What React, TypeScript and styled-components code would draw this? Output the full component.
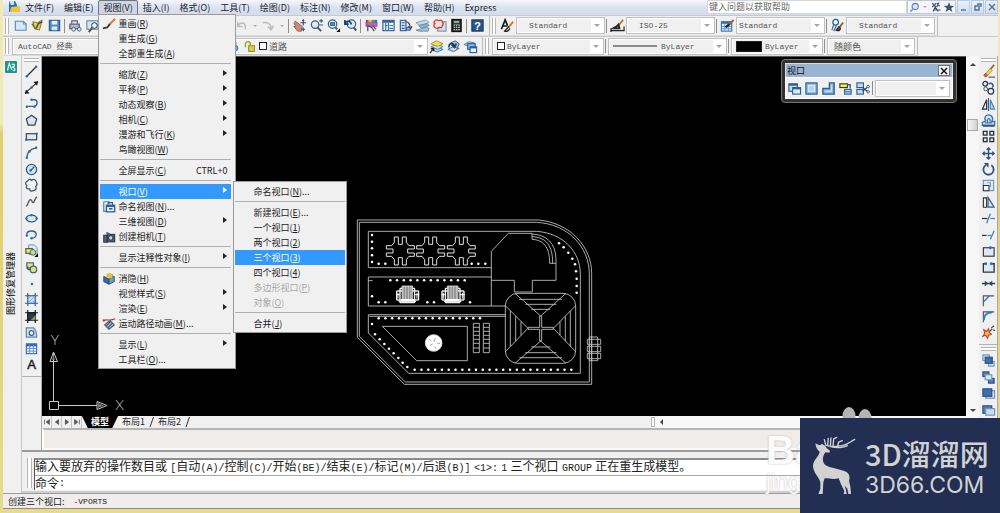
import React from 'react';
import styled, { createGlobalStyle, css } from 'styled-components';

const CJK = `"Noto Sans CJK SC", sans-serif`;
const MONO = `"Liberation Mono", "Noto Sans CJK SC", monospace`;

const GlobalStyle = createGlobalStyle`
  *, *::before, *::after { box-sizing: border-box; }
  body { margin: 0; background: #e9df9c; }
  button, input, select { font: inherit; color: inherit; margin: 0; padding: 0; border: 0; background: none; border-radius: 0; outline: none; }
  svg { display: block; flex: none; }
`;

/* ---------- icons, drawn on a 16 x 16 grid ---------- */

const B = '#2a5c94';
const L = '#a9cdea';
const K = '#2c333c';
const Y = '#ead94e';

const line = (d: string, stroke = K, w = 1.3, fill = 'none') => (
  <path d={d} stroke={stroke} strokeWidth={w} fill={fill} />
);
const dot = (x: number, y: number, r = 1.3, fill = '#1f6fc4') => <circle cx={x} cy={y} r={r} fill={fill} />;
const box = (x: number, y: number, w: number, h: number, fill = L, stroke = B, sw = 1.2) => (
  <rect x={x} y={y} width={w} height={h} fill={fill} stroke={stroke} strokeWidth={sw} />
);

const ICONS: Record<string, React.ReactNode> = {
  new: <>{line('M2.500 3.500H11L14 6.500V13H2.500Z', '#5f89b4', 1.2, '#d5e8f6')}{line('M11 3.500V6.500H14', '#5f89b4', 1)}</>,
  open: <>{line('M3 4L8 5 13 2 10 13 5 11Z', '#8a7420', 1, '#f0c850')}{line('M6 12L9 6 13 4', '#3b4a55', 1.5)}{line('M2 6L6 12', '#54813a', 1.5)}</>,
  save: <>{box(2.5, 2.5, 11, 11, '#4d86bf', '#27598c')}{box(5, 3, 6, 4, '#e4f0fa', '#e4f0fa', 0)}{box(5, 9, 6, 4, '#dfe6ec', '#dfe6ec', 0)}</>,
  print: <>{line('M4 6V3H10V6', '#55657a', 1.2, '#dfe7f0')}{box(2, 6.5, 10, 5, '#aeb9c9', '#4b5b74')}<circle cx="6" cy="12" r="2" fill="#e0e6ee" stroke="#4b5b74" /><circle cx="12" cy="12" r="2" fill="#e0e6ee" stroke="#4b5b74" /></>,
  preview: <>{box(2, 3, 12, 9, '#d5e8f6', '#5f89b4')}<circle cx="10" cy="8" r="3" fill="#e8f4fc" stroke={K} />{line('M8 10L4 15', '#6a5030', 2)}</>,
  page: <>{box(3, 2, 10, 12, '#e8f0f8', '#5f89b4')}{line('M5 5H11M5 8H11M5 11H9', B, 1)}</>,
  cut: <>{line('M5 2L10 11M11 2L6 11', '#556', 1.3)}<circle cx="5" cy="12.5" r="2" fill="none" stroke={B} /><circle cx="11" cy="12.5" r="2" fill="none" stroke={B} /></>,
  undo: line('M4 4V9H9M4 9C6 4 12 4 12 9V12', '#b9bdc2', 1.6),
  redo: line('M3 5C8 4 12 6 12 12M8.500 9L12 12.500 14.500 8.500', '#b9bdc2', 1.6),
  pan: <>{line('M3 3L11 9 10 14H6L2 9 4 9 2 5', '#9d5b52', 1, '#c98a80')}{line('M12 2V8M9 5H15M11 3L12 2 13 3M10 12H14M12 10V14', '#2b4c74', 1.2)}</>,
  zoomrt: <><circle cx="6.5" cy="7" r="4" fill="#dcebf7" stroke="#3f5f80" strokeWidth="1.3" />{line('M9 10L13 14', '#4b5560', 2)}{line('M11 3H15M13 1V5M11 7.500H15', B, 1.2)}</>,
  zoomwin: <><circle cx="7" cy="6.5" r="4.5" fill="#dcebf7" stroke="#3f5f80" strokeWidth="1.3" />{box(5, 5, 4, 3, '#5b8fc4', B, 1)}{line('M10 10L12 12', '#4b5560', 2)}<path d="M11 15H15V11Z" fill="#111" /></>,
  zoomprev: <><circle cx="9" cy="6.5" r="4.5" fill="#dcebf7" stroke="#3f5f80" strokeWidth="1.3" />{line('M11.500 10L14 13.500', '#4b5560', 2.2)}{line('M2 6C4 2 8 3 9 7M2 2V6.500H6', '#123e70', 1.7)}</>,
  props: <><path d="M2 2H5V5H2Z" fill="#d33" /><path d="M5 2H8V5H5Z" fill="#e8c030" /><path d="M8 2H11V5H8Z" fill="#38a838" /><path d="M11 2H14V5H11Z" fill="#3466d8" />{box(2, 5, 12, 4, '#b562c4', '#6b3c80', .5)}{line('M4 14V8L8 10 11 14M9 8L13 12', '#5a5560', 1.4)}</>,
  dc: <>{box(2, 2.5, 12, 11, '#e9f3fb', '#2f5f93')}{line('M2 4H14', '#2f5f93', 2)}{line('M5 5V13M8 5V13M4 8H7M9 8H13M9 11H13', '#3f78b4', 1.3)}</>,
  palettes: <>{box(2.5, 2.5, 6, 11, '#cfe2f2', '#2f5f93')}{line('M4 5H7M4 8H7M4 11H7', B, 1.2)}{line('M8 4C12 4 13 7 13 11M11 9L13 12 15 9', K, 1.3)}{box(9, 10, 4, 3, '#8cb7dc', B, 1)}</>,
  sheets: <>{line('M1 5L12 2 15 5 5 8Z', '#7f9db8', 1, '#c3dbed')}{line('M4 8L13 6 15 8 7 11Z', '#5f86a5', 1, '#8fb4cf')}{line('M1 13L12 10 15 11 14 14H4Z', '#6f8fa8', 1, '#a6c4d8')}</>,
  markup: <>{box(6, 4, 9, 10, '#cfe0ef', '#7f92a8')}{line('M3 3Q5 1 7 3 10 1 11 4 13 6 11 8 11 11 8 10 5 12 3 10 1 8 3 6 1 5 3 3Z', '#d4363e', 1.3, '#fae1e1')}</>,
  calc: <>{box(3, 1.5, 10, 13, '#23262b', '#111')}{box(5, 3, 6, 2.5, '#85c08a', '#333', .5)}{line('M5 7.500H11.500M5 10H11.500M5 12.500H11.500', '#d5d5d5', 1.3)}{line('M6.800 7V13.500M9.300 7V13.500', '#23262b', 1)}</>,
  textstyle: <>{line('M1.500 12L5.500 2 8 8M3 8.500H8', '#15181c', 1.8)}{line('M14 4L9 10', '#bf7428', 2)}{line('M9.500 9L5 14C7 15 10 13 10.500 11', '#222', 1.5)}</>,
  dimstyle: <>{line('M1 13.500H15M1 11V15M1 12L6 9M15 9V14', '#222', 1.3)}{line('M14 2L9 8', '#bf7428', 2)}{line('M9 7L5 11 10 11Z', '#222', 2)}</>,
  tablestyle: <>{box(1.5, 4, 11, 10, '#eaf4fc', '#3870b0')}{line('M1.500 5H12.500', '#3870b0', 2.5)}{line('M1.500 9H12M1.500 11.500H12M5 5V14M9 5V14', '#5d94cf', 1)}{line('M14.500 2L10 7', '#a55f20', 2)}{line('M10 6.500L6 10', '#222', 2.5)}</>,
  mleader: <><circle cx="6" cy="4.5" r="3" fill="#dff" stroke={B} strokeWidth="1.3" />{line('M4 7L2 13M7 8L4 14', B, 1.2)}{line('M14 5L10 10', '#a55f20', 2)}{line('M10 9L7 13C10 14 11 12 11 10', '#222', 1.7)}</>,
  layermake: <>{line('M2 11L9 9 15 11 9 14Z', '#4a7fae', 1, '#a9cdea')}{line('M2 8L9 6 15 8 9 11Z', '#5d86a0', 1, '#c9dff1')}{line('M2 5L8 2 15 5 9 8Z', '#a3902c', 1, '#f2df58')}{line('M1 15L5 10M5 13V10H2', '#222', 1.2)}</>,
  layerprev: <>{line('M2 11L8 8 14 10 8 13.500Z', '#4c627a', 1, '#c9dae9')}{line('M5 4L10 2 14 5 12 10 8 8Z', '#4c627a', 1, '#9fbdd8')}{line('M3 9C3 4 8 3 9 8M6 6L9 9 11 5', '#163c6c', 1.6)}</>,
  layerstate: <>{line('M1 6L6 3 12 4 8 8Z', '#4c7fa9', 1, '#bcd9ef')}{box(5, 5, 8, 6, '#8dbce4', B)}{box(7.5, 8.5, 7, 6, '#eaf4fc', B)}{line('M7.500 9H14.500', B, 2)}</>,
  sun: <>{box(2, 3, 9, 10, '#c6d9e8', '#6d91ae')}<circle cx="10" cy="10" r="3.5" fill="#77a7d0" stroke="#3f6e98" /></>,
  lock: <>{box(7, 7, 7, 7, '#dcd244', '#8a8420')}{line('M3 9V5C3 1 9 1 9 5V7', '#a49d28', 1.8)}</>,
  bulb: <><circle cx="8" cy="6" r="4" fill="#f3e26a" stroke="#8a8420" />{line('M6 11H10M6 13H10', '#777', 1.3)}</>,
  help: <>{box(2, 2, 12, 12, '#27588c', '#173c66')}<text x="8" y="12.5" textAnchor="middle" fontFamily="Liberation Sans" fontWeight="700" fontSize="12" fill="#fff">?</text></>,
  search: <><circle cx="9" cy="6.5" r="4.5" fill="#d8e6fa" stroke="#5a7fc4" strokeWidth="1.5" />{line('M6 10L2 14', '#8a94a8', 2.2)}</>,
  satellite: <>{line('M3 3L8 8M8 3L3 8M9 3L13 7M12 2L9 8', '#4c5f86', 1.8)}{line('M7 8L4 14M7 8L11 14M5 12H14', '#39486a', 1.5)}</>,
  star: <path d="M8 1.500L10 6.200 15 6.500 11 9.700 12.500 14.500 8 11.700 3.500 14.500 5 9.700 1 6.500 6 6.200Z" fill="#3d5678" />,
  xline: <>{line('M1 14L15 2', K, 1.4)}<path d="M1 15L2 10 6 14ZM15 1L10 2 14 6Z" fill="#222" />{dot(8, 8)}</>,
  lineSeg: <>{line('M3 13L13 3', K, 1.4)}{dot(3, 13)}{dot(13, 3)}</>,
  pline: <>{line('M8 4H11C15 4 15 10 11 11H3', '#43617f', 1.4)}{dot(8, 4)}{dot(11, 11.5)}{dot(3, 11.5)}</>,
  polygon: line('M8 2.500L13.500 6.500 11.500 13H4.500L2.500 6.500Z', '#3c4754', 1.4, '#d4e6f5'),
  rectangle: <>{box(2.5, 5, 11, 6.5, '#dceaf6', '#3c4754', 1.3)}{dot(2.5, 11.5)}{dot(13.5, 5)}</>,
  arc: <>{line('M3 14C3 8 7 4 13 3', '#43617f', 1.4)}{dot(3, 13.5)}{dot(6, 7)}{dot(13, 3)}</>,
  circle: <><circle cx="8" cy="8" r="5.5" fill="#cfe3f4" stroke="#3c5c7c" strokeWidth="1.4" />{line('M7 9L11 5', B, 1.4)}{dot(7, 9)}</>,
  cloud: line('M4 3Q6 0 8 2.500 12 0 13 4 15 7 12.500 9 14 13 10 13.500 6 15 6 11.500 1 12 3 8 0 5 4 3Z', '#4b5662', 1.4, '#eef3f8'),
  spline: line('M2 13C5 13 4 6 7 6 9 6 8 10 10 9 12 8 11 4 14 3', '#4b5662', 1.4),
  ellipse: <><ellipse cx="8" cy="8" rx="5.5" ry="3.6" fill="#dceaf6" stroke="#3c5c7c" strokeWidth="1.4" />{dot(2.5, 8)}{dot(13.5, 8)}{dot(8, 4.5)}</>,
  ellarc: <>{line('M3 8C3 3 13 3 13 8 13 10 11 12 8 12', '#3c5c7c', 1.4, '#e6eff8')}{dot(3, 9)}{dot(8, 12)}</>,
  insert: <>{line('M5 2H11L14 5V12H5Z', '#6b8fb0', 1, '#dbe9f5')}{box(2, 6, 7, 5, '#f2e66b', '#4c5a34')}<circle cx="9.5" cy="10" r="3" fill="#cadb74" stroke="#3d6490" /><path d="M11 15H15V11Z" fill="#111" /></>,
  block: <>{box(3, 3, 7, 5.5, '#f0e470', '#3d6490')}<circle cx="10" cy="10" r="3.5" fill="#dde27c" stroke="#3d6490" strokeWidth="1.3" />{line('M4 10H7M4 10V7', '#234', 1)}</>,
  point: dot(8.5, 8.5, 1.3),
  hatch: <>{box(4, 4, 8, 8, '#cfe3f4', '#33608e', 1.3)}{line('M4 1V4M12 1V4M4 12V15M12 12V15M1 4H4M12 4H15M1 12H4M12 12H15', '#33608e', 1.3)}{line('M4 8L8 4M4 12L12 4M8 12L12 8', '#7ea8cd', 1)}</>,
  gradient: <>{box(4, 4, 8, 8, '#25394f', '#14202e', 1.6)}{line('M7 12L12 7V12Z', '#8c8048', .5, '#9a8d50')}{line('M4 1V4M12 1V4M4 12V15M12 12V15M1 4H4M12 4H15M1 12H4M12 12H15', '#14202e', 1.3)}</>,
  region: <>{line('M2.500 3H10C13 5 13.500 8 13.500 13H2.500Z', '#5d86ad', 1.3, '#cfe2f2')}<circle cx="8" cy="8.5" r="2.5" fill="#fff" stroke="#33608e" strokeWidth="1.3" /></>,
  table: <>{box(2.5, 3, 11, 10.5, '#eff6fd', '#3565b0')}{line('M2.500 4.500H13.500', '#3565b0', 2.5)}{line('M2.500 8H13.500M2.500 10.800H13.500M6 4V13.500M10 4V13.500', '#5d8fce', 1)}</>,
  mtext: <text x="8" y="13" textAnchor="middle" fontFamily="Liberation Sans" fontSize="14" fill="#1c1f24" stroke="#1c1f24" strokeWidth=".5">A</text>,
  erase: <>{line('M14 1L8 8', '#a0622a', 2)}{line('M10 5L5 10 7 12 12 7Z', '#c49a2c', 1, Y)}{line('M5 10L3 12 5 14 7 12Z', '#a33', 1, '#dd6464')}{line('M8 14H15', K, 1)}</>,
  copy: <><circle cx="4.5" cy="4" r="2.5" fill="#eaf1f8" stroke={K} strokeWidth="1.3" /><circle cx="10.5" cy="12" r="3" fill="#eaf1f8" stroke={K} strokeWidth="1.3" /><circle cx="5" cy="9.5" r="2" fill="none" stroke={B} />{line('M8 4C12 2 14 6 12 8', B, 1.5)}</>,
  mirror: <>{line('M6 3V13H1.500Z', K, 1.3)}{line('M10 3V13H14.500Z', '#4c82ba', 1.3, '#c0dbf2')}{line('M8 1V15', B, 1.2)}</>,
  offset: <>{line('M1.500 13H14.500V9H11.500C14 5 11 2 8 2 5 2 3 5 5 8.500L1.500 10Z', '#3a74b4', 1.5, '#d6e8f7')}{line('M4 10.500H7.500C6 8 7 6 8.500 6 10 6 10 8 9 10.500H12', '#3a74b4', 1.2)}{line('M2 14H14.500', K, 1.2)}</>,
  array: <>{box(2.5, 2.5, 4, 4, '#dce6ef', K, 1.4)}{box(9.5, 2.5, 4, 4, '#dce6ef', K, 1.4)}{box(2.5, 9.5, 4, 4, '#dce6ef', K, 1.4)}{box(9.5, 9.5, 4, 4, '#dce6ef', K, 1.4)}</>,
  move: line('M8 2V14M2 8H14M6 4L8 2 10 4M6 12L8 14 10 12M4 6L2 8 4 10M12 6L14 8 12 10', '#2d5688', 1.5),
  rotate: <>{line('M5 3.500A5.500 5.500 0 1 0 11 3.500', '#2d5688', 1.9)}<path d="M3 1H8V6Z" fill="#2d5688" /></>,
  scale: <>{box(2.5, 2.5, 11, 11, '#d9e9f6', '#7294b2')}{line('M2.500 8H8.500V13.500H2.500Z', K, 1.1, '#f4f8fb')}{line('M10 10V5H7', '#7294b2', 1)}</>,
  stretch: <>{line('M2.500 3H6V13H2.500Z', K, 1.2)}{line('M7.500 2.500L14 13H7.500Z', '#3f5f80', 1.3, '#cfe2f2')}</>,
  trim: <>{line('M1 8H7', K, 1.3)}{line('M10 8H15', '#3c82cc', 1.3)}{line('M6 13L10 3', '#3c82cc', 1.4)}</>,
  extend: <>{line('M1 9H6', K, 1.3)}{line('M7 9H11', '#3c82cc', 1.3)}{line('M10 13L14 4', '#3c82cc', 1.4)}</>,
  breakpt: <>{box(2.5, 4, 11.5, 9, '#dfe9f2', K)}{dot(10, 4, 1.5)}</>,
  breakit: <>{line('M5 4H2.500V13H14V4H11', K, 1.4, '#dfe9f2')}{dot(5, 4, 1.5)}{dot(11, 4, 1.5)}</>,
  join: <>{line('M1 8H15', '#333', 1.5)}<path d="M4 5L8 8 4 11ZM12 5L8 8 12 11Z" fill="#24476e" /></>,
  chamfer: <>{line('M2.500 14V3H14', '#555', 1.2)}{line('M3 9L9 3', '#2d79c8', 1.5)}</>,
  fillet: <>{line('M2.500 14V3H14', '#555', 1.2)}{line('M3 12C3 6 6 3.500 12 3.500', '#2d79c8', 1.9)}</>,
  explode: <>{line('M3 5L6 7 8 4 9 8 11 10 8 11 7 14 5 11 2 12 4 9Z', '#c0392b', 1.2, '#f0c93d')}{line('M9 7L12 4M11 3L14 1M13 5L15 6', '#444', 1.2)}</>,
  front: <>{box(2, 2, 7, 6, '#c9dff1', '#6f93b5')}{box(8, 9, 6, 5, '#c9dff1', '#6f93b5')}{box(4.5, 4.5, 7.5, 6.5, '#3f6fa6', '#27508a')}</>,
  back: <>{box(2, 2, 6.5, 5, '#4f7fb4', '#27508a')}{box(8, 9, 6, 5, '#4f7fb4', '#27508a')}{box(4.5, 5, 7, 5.5, '#d5e6f4', '#6f93b5')}</>,
  above: <>{box(5, 5, 9.5, 8, '#c9dff1', '#6f93b5')}{box(2, 3, 9.5, 8, '#3f6fa6', '#27508a')}</>,
  under: <>{box(2, 3, 9.5, 8, '#4f7fb4', '#27508a')}{box(5, 6, 9.5, 7, '#c9dff1', '#6f93b5')}</>,
  brush: <>{line('M15 2L8 9', '#d48a4a', 2.5)}{line('M9 8L6 12 1 13', '#4b3526', 2.2)}</>,
  namedviews: <>{line('M2 2H8V5M2 2V13H5', '#5d86ad', 1.4)}{box(5, 6, 9.5, 7.5, '#e4effa', '#2d5f97', 1.5)}{line('M5 7H14M8 10H12', '#2d5f97', 1.8)}{line('M7 5V3H12V6', '#2d5f97', 1.3)}</>,
  camera: <>{box(2, 6, 4, 8, '#5c646d', '#30363d')}{box(6, 5, 8.5, 8.5, '#515e6c', '#283038')}<circle cx="10" cy="9" r="2.5" fill="#c9dcec" stroke="#1c2a3c" />{line('M5 3L9 5', '#3c6ca0', 2)}</>,
  hide: <>{line('M2 5L8 8V14L2 11Z', '#1f497e', 1, '#366ba8')}{line('M8 8L14 5V11L8 14Z', '#1f497e', 1, '#6d9fd2')}{line('M8 2V7H12V3Z', '#a58c18', 1, '#f0d33c')}{dot(8, 4, 3, '#e5c433')}</>,
  motion: <>{line('M2 4C5 2 10 5 15 2', '#c43838', 1.2)}{line('M3 9L9 4 14 9 8 14Z', '#40566e', 1.3, '#b8cbdc')}{line('M5 10L10 5M7 12L12 7', '#40566e', 1.5)}{dot(2, 4, 1.3, '#b33')}</>,
  recover: <>{box(2, 2, 12, 12, '#1f9d92', '#12776e')}{line('M4 12L6 4 9 11M9 5C13 4 13 8 9 8 14 9 13 13 10 12', '#d5f5ee', 1.4)}</>,
  vpnamed: <>{box(2, 3, 9, 8, '#bfdaf0', '#2f5f93')}{line('M2 4H11', '#2f5f93', 2)}{box(6, 7, 8.5, 7, '#dcebf8', '#2f5f93')}{line('M6 8H14', '#2f5f93', 1.8)}</>,
  vpsingle: <>{box(2, 2, 12, 12, '#7fb0dc', '#2f5f93')}{box(4.5, 4.5, 7, 7, '#b4d5f0', '#e4f1fb', 1)}</>,
  vppoly: <>{line('M9 2H14V14H2V8H9Z', '#2f5f93', 1.5, '#8fbce2')}{line('M11 4.500V11H4.500', '#dcebf8', 1)}</>,
  vpobj: <>{box(2, 3, 8, 4, '#f1ee4a', '#3a3a20')}{line('M10 4H13V8', '#2f5f93', 1.4)}{box(7, 9, 7, 5, '#bfdaf0', '#2f5f93')}{line('M7 11.500H14', '#2f5f93', 1)}</>,
  vpclip: <>{box(2, 2, 7, 5, '#bfdaf0', '#2f5f93')}{box(2, 9, 7, 5, '#bfdaf0', '#2f5f93')}{line('M8 7L13 11M8 11L13 7', '#3c4a66', 1.3)}<circle cx="14" cy="11.5" r="1.3" fill="none" stroke="#2f5f93" /><circle cx="14" cy="6" r="1.3" fill="none" stroke="#2f5f93" /></>,
};

const Icon = ({ name, size = 15 }: { name: string; size?: number }) => (
  <svg width={size} height={size} viewBox="0 0 16 16" aria-hidden="true">{ICONS[name]}</svg>
);

/* ---------- frame ---------- */

const Window = styled.div`
  position: relative;
  display: flex;
  flex-direction: column;
  min-height: 100vh;
  padding: 0 2px 4px 3px;
  background: linear-gradient(to bottom, #f0e9b4 0, #f0e9b4 24%, #e0cf6c 26%, #e6da8c 100%);
  font-family: ${CJK};
  font-size: 9px;
  line-height: 14px;
  color: #222;
`;

const MenuBar = styled.nav`
  position: relative;
  z-index: 5;
  display: flex;
  align-items: stretch;
  height: 15px;
  background: linear-gradient(to bottom, #f4f6fb, #dbe2f1 50%, #d3dbee);
`;

const AppLogo = styled.span`
  display: flex;
  width: 17px;
  padding: 0 2px 0 5px;
`;

const MenuSlot = styled.div`
  position: relative;
  display: flex;
`;

const MenuButton = styled.button<{ $open?: boolean }>`
  padding: 0 4px;
  line-height: 13px;
  border: 1px solid transparent;
  white-space: nowrap;
  color: #1a1f2b;
  ${p => p.$open && css`
    border: 1px solid #70757f;
    border-radius: 2px 2px 0 0;
    background: #cfd5e4;
  `}
`;

const SearchBox = styled.input`
  flex: 0 1 200px;
  min-width: 80px;
  margin-left: auto;
  padding: 0 1px;
  height: 14px;
  background: #fff;
  border: 1px solid #d4d7de;
  color: #555;
  &::placeholder { color: #666; opacity: 1; }
`;

const InfoTools = styled.div`
  display: flex;
  align-items: center;
  height: 14px;
  background: #f3f6fb;
  border: 1px solid #c2c7d2;
`;

const InfoButton = styled.button<{ $w?: number }>`
  display: flex;
  align-items: center;
  justify-content: center;
  width: ${p => p.$w ?? 13}px;
  height: 12px;
`;

const DocButtons = styled.div`
  display: flex;
  gap: 1px;
  margin-left: 1px;
`;

const DocButton = styled.button`
  display: flex;
  align-items: center;
  justify-content: center;
  width: 13px;
  height: 14px;
  background: linear-gradient(#e9f2fb, #cddff1);
  border: 1px solid #b4cbe2;
`;

/* ---------- drop-down menus ---------- */

const MenuPanel = styled.ul<{ $sub?: boolean }>`
  position: absolute;
  z-index: 10;
  top: ${p => (p.$sub ? '-3px' : '14px')};
  left: ${p => (p.$sub ? '133px' : '0')};
  width: ${p => (p.$sub ? 114 : 138)}px;
  margin: 0;
  padding: ${p => (p.$sub ? '2px 1px 1px' : '1px 4px 1px 1px')};
  list-style: none;
  background: #f0f0f0;
  border: 1px solid #9b9b9b;
`;

const MenuRow = styled.li<{ $active?: boolean; $disabled?: boolean }>`
  position: relative;
  color: ${p => (p.$disabled ? '#a8a8a8' : p.$active ? '#fff' : '#222')};
  background: ${p => (p.$active ? '#3399ff' : 'transparent')};
`;

const MenuItem = styled.button`
  display: flex;
  align-items: center;
  width: 100%;
  height: 15px;
  line-height: 15px;
  text-align: left;
  white-space: nowrap;
`;

const MenuGutter = styled.span`
  display: flex;
  justify-content: center;
  width: 18px;
  flex: none;
`;

const Shortcut = styled.span`
  margin-left: auto;
  padding-right: 4px;
`;

const SubArrow = styled.span`
  margin-left: auto;
  margin-right: 4px;
  margin-bottom: 4px;
  border-left: 4px solid currentColor;
  border-top: 3px solid transparent;
  border-bottom: 3px solid transparent;
`;

const MenuRule = styled.li`
  height: 6px;
  padding-top: 2px;
  &::before { content: ''; display: block; height: 1px; background: #b0b0b0; }
`;

/* ---------- toolbars ---------- */

const ToolRow = styled.div<{ $h: number }>`
  display: flex;
  height: ${p => p.$h}px;
  background: #f0f0f0;
  border-top: 1px solid #c9c9c9;
`;

const ToolGroup = styled.div<{ $pad?: number }>`
  display: flex;
  align-items: center;
  padding-right: ${p => p.$pad ?? 3}px;
  border-right: 1px solid #bdbdbd;
  border-bottom: 1px solid #dcdcdc;
`;

const Grip = styled.span<{ $across?: boolean }>`
  flex: none;
  ${p => p.$across ? css`
    width: 15px; height: 4px; margin: 2px auto 1px;
    border-top: 1px solid #b4b4b4; border-bottom: 1px solid #b4b4b4;
  ` : css`
    width: 4px; height: 16px; margin: 0 3px 0 2px;
    border-left: 1px solid #b4b4b4; border-right: 1px solid #b4b4b4;
  `}
  background: #fff;
`;

const ToolButton = styled.button<{ $w?: number }>`
  display: flex;
  flex: none;
  align-items: center;
  justify-content: center;
  width: ${p => p.$w ?? 17}px;
  height: 17px;
`;

const Divider = styled.span<{ $m?: number }>`
  flex: none;
  width: 1px;
  height: 14px;
  margin: 0 ${p => p.$m ?? 2}px 0 1px;
  background: #909090;
`;

const ComboFrame = styled.span<{ $w: number }>`
  display: flex;
  flex: none;
  align-items: center;
  width: ${p => p.$w}px;
  height: 17px;
  border: 1px solid #c0c0c0;
  box-shadow: inset 0 0 0 1px #fff;
  background: #f0f0f0;
`;

const ComboSelect = styled.select<{ $indent: number; $cjk?: boolean }>`
  appearance: none;
  flex: 1;
  min-width: 0;
  height: 15px;
  padding-left: ${p => p.$indent}px;
  font-family: ${p => (p.$cjk ? CJK : MONO)};
  font-size: ${p => (p.$cjk ? 9 : 8)}px;
  line-height: 15px;
  color: #555;
`;

const ComboArrow = styled.span`
  display: flex;
  align-items: center;
  justify-content: center;
  width: 12px;
  height: 13px;
  margin-right: 1px;
  background: #fff;
  &::after { content: ''; border-top: 3px solid #a5a5a5; border-left: 3px solid transparent; border-right: 3px solid transparent; }
`;

const Swatch = styled.span<{ $w: number; $h: number; $fill: string }>`
  flex: none;
  width: ${p => p.$w}px;
  height: ${p => p.$h}px;
  margin-left: 4px;
  background: ${p => p.$fill};
  border: 1px solid ${p => (p.$h === 1 ? '#8a8a8a' : '#222')};
`;

const Caret = styled.span`
  border-top: 2px solid #aaa;
  border-left: 2px solid transparent;
  border-right: 2px solid transparent;
`;

/* ---------- work area ---------- */

const Body = styled.div`
  display: flex;
  flex: 1;
  min-height: 0;
  background: #f0f0f0;
`;

const PaletteStrip = styled.aside`
  display: flex;
  flex-direction: column;
  align-items: flex-start;
  justify-content: space-between;
  flex: none;
  width: 18px;
  padding: 4px 1px 178px;
`;

const VerticalTitle = styled.span`
  writing-mode: vertical-rl;
  text-orientation: sideways;
  transform: rotate(180deg);
  line-height: 14px;
  color: #000;
`;

const Center = styled.div`
  display: flex;
  flex: 1;
  min-width: 0;
  flex-direction: column;
  border-left: 1px solid #c8c8c8;
`;

const Upper = styled.div`
  display: flex;
  flex: 1;
  min-height: 0;
`;

const SideBar = styled.div<{ $w: number }>`
  flex: none;
  width: ${p => p.$w}px;
  background: #f0f0f0;
  border-right: 1px solid #a9a9a9;
`;

const SideGroup = styled.div<{ $h: number }>`
  display: flex;
  flex-direction: column;
  align-items: center;
  justify-content: space-between;
  height: ${p => p.$h}px;
  padding-bottom: 3px;
  border-bottom: 1px solid #b4b4b4;
`;

const SideButton = styled.button`
  display: flex;
  flex: none;
  justify-content: center;
  align-items: center;
  width: 16px;
  height: 16px;
`;

const Workspace = styled.div`
  display: flex;
  flex: 1;
  min-width: 0;
  flex-direction: column;
`;

const CanvasRow = styled.div`
  display: flex;
  flex: 1;
  min-height: 0;
`;

const Canvas = styled.main`
  position: relative;
  flex: 1;
  min-width: 0;
  overflow: hidden;
  background: #000;
  border-top: 1px solid #555;
`;

const Drawing = styled.svg`
  position: absolute;
  left: 0;
  top: 0;
`;

const VScroll = styled.div`
  display: flex;
  flex-direction: column;
  align-items: center;
  justify-content: space-between;
  flex: none;
  width: 13px;
  padding: 5px 0 3px;
  background: #f6f6f6;
`;

const ScrollArrow = styled.button<{ $dir: 'up' | 'down' | 'left' }>`
  width: 6px;
  height: 6px;
  display: flex;
  align-items: center;
  justify-content: center;
  &::after {
    content: '';
    border: 3px solid transparent;
    ${p => p.$dir === 'up' && 'border-bottom-color: #444; border-top-width: 0;'}
    ${p => p.$dir === 'down' && 'border-top-color: #444; border-bottom-width: 0;'}
    ${p => p.$dir === 'left' && 'border-right-color: #444; border-left-width: 0;'}
  }
`;

const VTrack = styled.div`
  flex: 1;
  width: 100%;
  padding-top: 52px;
`;

const VThumb = styled.div`
  height: 12px;
  margin: 0 1px;
  background: linear-gradient(to right, #f6f6f6, #d2d2d6);
  border: 1px solid #a9a9a9;
`;

const TabRow = styled.div`
  display: flex;
  height: 12px;
  background: #f0f0f0;
  line-height: 12px;
`;

const TabNav = styled.button`
  display: flex;
  align-items: center;
  justify-content: center;
  width: 10px;
  border-right: 1px solid #c4c4c4;
`;

const Tab = styled.button<{ $on?: boolean }>`
  position: relative;
  padding: 0 3px 0 4px;
  line-height: 12px;
  white-space: nowrap;
  ${p => p.$on && css`
    color: #fff;
    background: #000;
    clip-path: polygon(0 0, 100% 0, 84% 100%, 16% 100%);
    padding: 0 9px;
    font-weight: 700;
  `}
`;

const TabSlash = styled.svg`
  margin: 0 0 0 1px;
`;

const HScroll = styled.div`
  display: flex;
  align-items: center;
  flex: 0 1 328px;
  margin-left: auto;
  gap: 3px;
  background: #f8f8f8;
`;

const Splitter = styled.span`
  width: 4px;
  height: 10px;
  background: #fff;
  border: 1px solid #b5b5b5;
`;

const DockPanel = styled.div`
  height: 22px;
  background: #f0ecea;
  border-top: 2px solid #b5b5b5;
  border-left: 2px solid #fff;
  border-bottom: 2px solid #fafafa;
`;

const CommandDock = styled.section`
  display: flex;
  height: 43px;
  padding: 6px 2px 1px 4px;
  border-top: 2px solid #9c9c9c;
  border-bottom: 2px solid #cfcfcf;
`;

const CommandGrip = styled(Grip)`
  height: 30px;
  width: 5px;
  margin: 0 2px 0 1px;
`;

const CommandBox = styled.div`
  flex: 1;
  min-width: 0;
  background: #fff;
  border-top: 2px solid #8c8c8c;
  border-left: 1px solid #555;
  font-family: "Liberation Sans", ${CJK};
  font-size: 12px;
  line-height: 16px;
`;

const CommandHistory = styled.p`
  margin: 0;
  height: 16px;
  white-space: nowrap;
  border-bottom: 1px solid #aaa;
  line-height: 14px;
`;

const Code = styled.span`
  font-family: ${MONO};
  font-size: 10px;
`;

const CommandPrompt = styled.label`
  display: flex;
  height: 16px;
`;

const CommandInput = styled.input`
  flex: 1;
  height: 16px;
`;

const StatusBar = styled.footer`
  display: flex;
  gap: 9px;
  height: 16px;
  padding-left: 5px;
  line-height: 15px;
  background: #f0edec;
  border-top: 1px solid #9b9b9b;
  border-bottom: 1px solid #8f8f80;
`;

const StatusCode = styled.span`
  font-family: ${MONO};
  font-size: 8px;
`;

/* ---------- floating viewport toolbar ---------- */

const FloatBar = styled.section`
  position: absolute;
  top: 2px;
  right: 9px;
  width: 176px;
  padding: 3px;
  background: #33322f;
  border: 1px solid #77756f;
  border-radius: 4px;
`;

const FloatTitle = styled.header`
  display: flex;
  align-items: center;
  justify-content: space-between;
  height: 14px;
  padding: 0 2px 0 1px;
  background: #99b4d1;
  border: 1px solid #d5dde6;
  border-bottom: 0;
  color: #111;
`;

const CloseButton = styled.button`
  display: flex;
  align-items: center;
  justify-content: center;
  width: 12px;
  height: 11px;
  background: #f4f4f4;
  border: 1px solid #777;
`;

const FloatTools = styled.div`
  display: flex;
  align-items: center;
  height: 22px;
  background: #f0f0f0;
  border: 1px solid #fff;
`;

/* ---------- watermarks ---------- */

const Brand = styled.div`
  position: absolute;
  z-index: 20;
  right: 0;
  bottom: 0;
  display: flex;
  gap: 9px;
  width: 200px;
  height: 95px;
  padding-left: 12px;
  background: #222e52;
  color: #d2d2d2;
`;

const BrandText = styled.div`
  padding-top: 14px;
  white-space: nowrap;
`;

const BrandName = styled.div`
  font-weight: 500;
  font-size: 29px;
  line-height: 42px;
`;

const BrandSite = styled.div`
  font-family: Inter, sans-serif;
  font-size: 23px;
  line-height: 22px;
`;

const Mark = styled.div`
  position: absolute;
  z-index: 15;
  right: 180px;
  bottom: 20px;
  width: 54px;
  font-family: "Liberation Sans", sans-serif;
  color: #fbfbfb;
  text-shadow: 0 0 2px #b5b5b5;
`;

const MarkName = styled.div`
  font-weight: 700;
  font-size: 40px;
  line-height: 42px;
`;

const MarkSub = styled.div`
  font-size: 22px;
  line-height: 22px;
`;

const Paw = styled.svg`
  position: absolute;
  z-index: 15;
  right: 128px;
  bottom: 94px;
`;

/* ---------- data ---------- */

type Entry = { text: string; k?: string; tail?: string; icon?: string; sub?: boolean; short?: string; active?: boolean; disabled?: boolean } | null;

const VIEW_MENU: Entry[] = [
  { text: '重画', k: 'R', icon: 'brush' },
  { text: '重生成', k: 'G' },
  { text: '全部重生成', k: 'A' },
  null,
  { text: '缩放', k: 'Z', sub: true },
  { text: '平移', k: 'P', sub: true },
  { text: '动态观察', k: 'B', sub: true },
  { text: '相机', k: 'C', sub: true },
  { text: '漫游和飞行', k: 'K', sub: true },
  { text: '鸟瞰视图', k: 'W' },
  null,
  { text: '全屏显示', k: 'C', short: 'CTRL+0' },
  null,
  { text: '视口', k: 'V', sub: true, active: true },
  { text: '命名视图', k: 'N', tail: '...', icon: 'namedviews' },
  { text: '三维视图', k: 'D', sub: true },
  { text: '创建相机', k: 'T', icon: 'camera' },
  null,
  { text: '显示注释性对象', k: 'I', sub: true },
  null,
  { text: '消隐', k: 'H', icon: 'hide' },
  { text: '视觉样式', k: 'S', sub: true },
  { text: '渲染', k: 'E', sub: true },
  { text: '运动路径动画', k: 'M', tail: '...', icon: 'motion' },
  null,
  { text: '显示', k: 'L', sub: true },
  { text: '工具栏', k: 'O', tail: '...' },
];

const VIEWPORT_MENU: Entry[] = [
  { text: '命名视口', k: 'N', tail: '...' },
  null,
  { text: '新建视口', k: 'E', tail: '...' },
  { text: '一个视口', k: '1' },
  { text: '两个视口', k: '2' },
  { text: '三个视口', k: '3', active: true },
  { text: '四个视口', k: '4' },
  { text: '多边形视口', k: 'P', disabled: true },
  { text: '对象', k: 'O', disabled: true },
  null,
  { text: '合并', k: 'J' },
];

const DRAW = ['lineSeg', 'xline', 'pline', 'polygon', 'rectangle', 'arc', 'circle', 'cloud', 'spline', 'ellipse', 'ellarc', 'insert', 'block', 'point', 'hatch', 'gradient', 'region', 'table', 'mtext'];
const MODIFY = ['erase', 'copy', 'mirror', 'offset', 'array', 'move', 'rotate', 'scale', 'stretch', 'trim', 'extend', 'breakpt', 'breakit', 'join', 'chamfer', 'fillet', 'explode'];
const ORDER = ['front', 'back', 'above', 'under'];

const MenuList = ({ items, sub }: { items: Entry[]; sub?: boolean }) => (
  <MenuPanel $sub={sub}>
    {items.map((m, i) => m === null ? <MenuRule key={i} role="separator" /> : (
      <MenuRow key={i} $active={m.active} $disabled={m.disabled}>
        <MenuItem disabled={m.disabled}>
          <MenuGutter>{m.icon && <Icon name={m.icon} size={14} />}</MenuGutter>
          <span>{m.text}({<u>{m.k}</u>}){m.tail}</span>
          {m.short && <Shortcut>{m.short}</Shortcut>}
          {m.sub && <SubArrow />}
        </MenuItem>
        {m.sub && m.active && <MenuList items={VIEWPORT_MENU} sub />}
      </MenuRow>
    ))}
  </MenuPanel>
);

const Tools = ({ names }: { names: string[] }) => (
  <>{names.map(n => <ToolButton key={n} aria-label={n}><Icon name={n} /></ToolButton>)}</>
);

const Combo = ({ w, value, label, indent = 4, cjk, children }: { w: number; value: string; label: string; indent?: number; cjk?: boolean; children?: React.ReactNode }) => (
  <ComboFrame $w={w}>
    {children}
    <ComboSelect aria-label={label} $indent={indent} $cjk={cjk}><option>{value}</option></ComboSelect>
    <ComboArrow />
  </ComboFrame>
);

/* ---------- site plan ---------- */

const cross = 'M-18-42H-6V-20H6V-42H18V-26L26-16H42V-6H22V6H42V16H26L18 26V42H6V20H-6V42H-18V26L-26 16H-42V6H-22V-6H-42V-16H-26L-18-26Z';

const row = (x0: number, x1: number, n: number, y: number) =>
  Array.from({ length: n }, (_, i) => [x0 + ((x1 - x0) * i) / (n - 1), y]);

const TREES: number[][] = [
  [66, 75], [66, 95], [66, 115], [66, 136], [66, 156], [86, 161], [106, 161],
  [365, 161], [385, 161], [406, 161],
  ...row(121, 344, 12, 211), [66, 259], [86, 277], [106, 277], [232, 277], [252, 277], [360, 277],
  ...row(86, 390, 16, 325), [66, 342], [75, 373], [89, 388], [103, 402], [117, 416], [131, 430], [145, 444], [158, 458], [172, 471],
  ...row(194, 664, 24, 479),
  [627, 100], [641, 112], [655, 128], [667, 146], [675, 163], [678, 184], [680, 206], [680, 228], [680, 248],
];

const Building = ({ x }: { x: number }) => (
  <g transform={`translate(${x} 252)`}>
    <path d="M-32-9H34V18H-32ZM-22-17H22V26H-22Z" fill="#000" />
    <path d="M-32-9H34M-32-9V18H-22M34-9V18H22M-22-17H22V26H-22ZM-28-4V14M29-4V14M-34 2H-22M22 2H36M-26 22H26" strokeWidth="3" stroke="#fff" />
    <path d="M-16-24H16V22H-16Z" fill="#8f8f8f" stroke="#fff" strokeWidth="2" />
    <path d="M-13-24V22M-5-24V22M3-24V22M11-24V22" stroke="#e5e5e5" strokeWidth="2" />
    <path d="M-20 18H20" stroke="#fff" strokeWidth="6" />
  </g>
);

const SitePlan = () => (
  <Drawing width="923" height="360" viewBox="42 57 923 360" aria-label="site plan">
    <g transform="translate(350 210) scale(.33333)" fill="none" stroke="#c4c4c4" strokeWidth="2.6">
      <path d="M22 30H565C660 38 725 110 725 190V523H163L22 382Z" />
      <path d="M28 37H560C655 42 718 112 718 192V516H166L28 379Z" />
      <path d="M424 173H55V64H560C640 70 691 125 691 192V490H176L55 369V314H466M466 319H58" />
      <path d="M424 201H55V288H466M55 212H68" />
      <path d="M424 288V124L475 70H546V88M424 211H493V246H547V211H618V150C618 100 590 74 546 72M546 80C588 82 608 105 608 160M546 88C580 90 599 110 599 160H618" />
      {[151, 242, 334].map(x => <path key={x} d={cross} transform={`translate(${x} 123)`} stroke="#e2e2e2" strokeWidth="3" />)}
      <rect x="466" y="250" width="211" height="210" rx="38" />
      <path d="M495 250L572 318 648 250M466 287L534 355 466 425M677 287L610 355 677 425M495 460L572 393 648 460" />
      <path d="M508 268H636M526 283H619M544 298H601M508 443H636M526 428H619M544 411H601" />
      <path d="M481 303V410M497 319V394M513 335V376M661 303V410M646 319V394M630 335V376" />
      <path d="M534 352H569V318H575V352H610V358H575V393H569V358H534Z" />
      <path d="M97 349H352V452H200Z" />
      <path d="M370 340H388V428H370ZM400 340H418V428H400Z" />
      <path d="M370 352H388M370 364H388M370 376H388M370 388H388M370 400H388M370 414H388M400 352H418M400 364H418M400 376H418M400 388H418M400 400H418M400 414H418" />
      <path d="M712 388H752V403H712ZM712 409H752V425H712ZM712 430H752V446H712ZM718 381H743V452H718ZM725 378V452" />
      <Building x={172} />
      <Building x={308} />
      <circle cx="251" cy="399" r="25" fill="#fff" stroke="#ddd" />
      <path d="M238 388L244 392M256 384L252 396M262 400H270M240 406L248 402M254 410L258 416" stroke="#777" strokeWidth="2" />
      {TREES.map(([x, y], i) => <circle key={i} cx={x} cy={y} r="3.8" fill="#fff" stroke="none" />)}
    </g>
    <g fill="none" stroke="#c9c9c9">
      <path d="M49.500 401.500H58.500V409.500H49.500ZM53.500 401V352M53.500 352L50 361.500H57.500ZM58.500 405.500H97M97 401.500L107 405.500 97 409.500Z" />
      <path d="M52 360L53.500 354 55 360ZM98 403L104 405.500 98 408Z" fill="#777" stroke="none" />
    </g>
    <g fill="#c9c9c9" fontFamily="Lato" fontWeight="300" fontSize="14" textAnchor="middle">
      <text x="55" y="345">Y</text>
      <text x="119.5" y="410">X</text>
    </g>
  </Drawing>
);

const NAV = ['M2 2V8M8 2L4 5 8 8Z', 'M7 2L3 5 7 8Z', 'M3 2L7 5 3 8Z', 'M2 2L6 5 2 8ZM8 2V8'];

export default function App() {
  return (
    <Window>
      <GlobalStyle />
      <MenuBar>
        <AppLogo>
          <svg width="13" height="13" viewBox="0 0 13 13">
            <path d="M1 1H7L9 5V12H1Z" fill="#2a6db0" />
            <path d="M1 1H6V5H3Z" fill="#cfe2f0" />
            <path d="M3 7L12 6V12H2Z" fill="#f2c230" />
          </svg>
        </AppLogo>
        <MenuButton>文件(F)</MenuButton>
        <MenuButton>编辑(E)</MenuButton>
        <MenuSlot>
          <MenuButton $open aria-expanded="true">视图(V)</MenuButton>
          <MenuList items={VIEW_MENU} />
        </MenuSlot>
        {['插入(I)', '格式(O)', '工具(T)', '绘图(D)', '标注(N)', '修改(M)', '窗口(W)', '帮助(H)', 'Express'].map(t => <MenuButton key={t}>{t}</MenuButton>)}
        <SearchBox aria-label="搜索" placeholder="键入问题以获取帮助" />
        <InfoTools>
          <InfoButton aria-label="search"><Icon name="search" size={11} /></InfoButton>
          <InfoButton $w={8} aria-label="search options"><Caret /></InfoButton>
          <InfoButton aria-label="communication"><Icon name="satellite" size={12} /></InfoButton>
          <InfoButton aria-label="favorites"><Icon name="star" size={12} /></InfoButton>
        </InfoTools>
        <DocButtons>
          {['M2 8H7', 'M4 2H8V5M2 4H6V8H2Z', 'M2 2L8 8M8 2L2 8'].map((d, i) => (
            <DocButton key={d} aria-label={['minimize', 'restore', 'close'][i]}>
              <svg width="10" height="10" viewBox="0 0 10 10"><path d={d} fill="none" stroke="#566f8c" strokeWidth="1.4" /></svg>
            </DocButton>
          ))}
        </DocButtons>
      </MenuBar>

      <ToolRow $h={21}>
        <ToolGroup>
          <Grip />
          <Tools names={['new', 'open', 'save']} />
          <Divider />
          <Tools names={['print', 'preview', 'page']} />
          <Divider />
          <Tools names={['cut', 'block', 'table', 'brush', 'insert', 'recover']} />
          <Divider $m={7} />
          <ToolButton aria-label="undo"><Icon name="undo" /></ToolButton>
          <ToolButton $w={9} aria-label="undo list"><Caret /></ToolButton>
          <ToolButton aria-label="redo"><Icon name="redo" /></ToolButton>
          <ToolButton $w={11} aria-label="redo list"><Caret /></ToolButton>
          <Divider />
          <Tools names={['pan', 'zoomrt', 'zoomwin', 'zoomprev']} />
          <Divider />
          <Tools names={['props', 'dc', 'palettes', 'sheets', 'markup', 'calc']} />
          <Divider />
          <Tools names={['help']} />
        </ToolGroup>
        <ToolGroup $pad={2}>
          <Grip />
          <Tools names={['textstyle']} />
          <Combo w={89} value="Standard" label="文字样式" indent={12} />
          <Divider />
          <Tools names={['dimstyle']} />
          <Combo w={89} value="ISO-25" label="标注样式" indent={12} />
          <Divider />
          <Tools names={['tablestyle']} />
          <Combo w={89} value="Standard" label="表格样式" indent={2} />
          <Divider />
          <Tools names={['mleader']} />
          <Combo w={89} value="Standard" label="多重引线样式" indent={12} />
        </ToolGroup>
      </ToolRow>

      <ToolRow $h={20}>
        <ToolGroup>
          <Grip />
          <Combo w={130} value="AutoCAD 经典" label="工作空间" indent={5} />
        </ToolGroup>
        <ToolGroup>
          <Grip />
          <ToolButton aria-label="layers"><Icon name="layerstate" /></ToolButton>
          <Combo w={256} value="道路" label="图层" indent={2} cjk>
            <ToolButton $w={50} aria-label="layer on"><Icon name="bulb" size={12} /></ToolButton>
            <ToolButton $w={20} aria-label="freeze"><Icon name="sun" size={13} /></ToolButton>
            <ToolButton $w={12} aria-label="lock"><Icon name="lock" size={13} /></ToolButton>
            <Swatch $w={8} $h={8} $fill="#fff" />
          </Combo>
          <Tools names={['layermake', 'layerprev', 'layerstate']} />
        </ToolGroup>
        <ToolGroup $pad={2}>
          <Grip />
          <Combo w={112} value="ByLayer" label="颜色" indent={2}><Swatch $w={8} $h={8} $fill="#fff" /></Combo>
          <Divider />
          <Combo w={119} value="ByLayer" label="线型"><Swatch $w={44} $h={1} $fill="#8a8a8a" /></Combo>
          <Divider />
          <Combo w={92} value="ByLayer" label="线宽" indent={3}><Swatch $w={26} $h={11} $fill="#000" /></Combo>
          <Divider />
          <Combo w={88} value="随颜色" label="打印样式" indent={6} cjk />
        </ToolGroup>
      </ToolRow>

      <Body>
        <PaletteStrip>
          <Icon name="recover" size={14} />
          <VerticalTitle>图形修复管理器</VerticalTitle>
        </PaletteStrip>
        <Center>
          <Upper>
            <SideBar $w={20}>
              <SideGroup $h={321}>
                <Grip $across />
                {DRAW.map(n => <SideButton key={n} aria-label={n}><Icon name={n} /></SideButton>)}
              </SideGroup>
            </SideBar>
            <Workspace>
              <CanvasRow>
                <Canvas>
                  <SitePlan />
                  <FloatBar>
                    <FloatTitle>
                      <span>视口</span>
                      <CloseButton aria-label="close">
                        <svg width="8" height="8" viewBox="0 0 8 8"><path d="M1 1L7 7M7 1L1 7" stroke="#111" strokeWidth="1.5" /></svg>
                      </CloseButton>
                    </FloatTitle>
                    <FloatTools>
                      <Tools names={['vpnamed', 'vpsingle', 'vppoly', 'vpobj', 'vpclip']} />
                      <Divider />
                      <Combo w={75} value="" label="视口比例" />
                    </FloatTools>
                  </FloatBar>
                </Canvas>
                <VScroll>
                  <ScrollArrow $dir="up" aria-label="scroll up" />
                  <VTrack><VThumb /></VTrack>
                  <ScrollArrow $dir="down" aria-label="scroll down" />
                </VScroll>
              </CanvasRow>
              <TabRow>
                {NAV.map(d => (
                  <TabNav key={d} aria-label="tab navigation">
                    <svg width="8" height="8" viewBox="0 0 10 10"><path d={d} fill="#555" stroke="#555" /></svg>
                  </TabNav>
                ))}
                <Tab $on>模型</Tab>
                {['布局1', '布局2'].map(t => (
                  <React.Fragment key={t}>
                    <Tab>{t}</Tab>
                    <TabSlash width="5" height="12" viewBox="0 0 5 12"><path d="M4.500 1L1 11" stroke="#333" /></TabSlash>
                  </React.Fragment>
                ))}
                <HScroll>
                  <Splitter />
                  <ScrollArrow $dir="left" aria-label="scroll left" />
                </HScroll>
              </TabRow>
              <DockPanel />
            </Workspace>
            <SideBar $w={19}>
              <SideGroup $h={289}>
                <Grip $across />
                {MODIFY.map(n => <SideButton key={n} aria-label={n}><Icon name={n} /></SideButton>)}
              </SideGroup>
              <SideGroup $h={77}>
                <Grip $across />
                {ORDER.map(n => <SideButton key={n} aria-label={n}><Icon name={n} /></SideButton>)}
              </SideGroup>
            </SideBar>
          </Upper>
          <CommandDock>
            <CommandGrip />
            <CommandBox>
              <CommandHistory>
                输入要放弃的操作数目或 <Code>[</Code>自动<Code>(A)/</Code>控制<Code>(C)/</Code>开始<Code>(BE)/</Code>结束<Code>(E)/</Code>标记<Code>(M)/</Code>后退<Code>(B)]</Code> <Code>&lt;1&gt;:</Code> <Code>1</Code> 三个视口 <Code>GROUP</Code> 正在重生成模型。
              </CommandHistory>
              <CommandPrompt>
                命令<Code>:</Code>
                <CommandInput aria-label="命令" />
              </CommandPrompt>
            </CommandBox>
          </CommandDock>
        </Center>
      </Body>

      <StatusBar>
        <span>创建三个视口:</span>
        <StatusCode>-VPORTS</StatusCode>
      </StatusBar>

      <Paw width="30" height="12" viewBox="0 0 30 12" aria-hidden="true">
        <ellipse cx="7" cy="9" rx="6.5" ry="9" fill="#b4b4b4" />
        <ellipse cx="23" cy="11" rx="6.5" ry="9" fill="#b4b4b4" />
      </Paw>
      <Mark aria-hidden="true">
        <MarkName>Ba</MarkName>
        <MarkSub>jing</MarkSub>
      </Mark>
      <Brand>
        <svg width="44" height="95" viewBox="216 69 132 285" aria-hidden="true">
          <path
            fill="#d2d2d2"
            d="M226 145L238 151 246 147 255 152 262 161 270 167 268 173 256 172 251 181C247 192 248 204 257 211C272 220 300 222 318 230C328 236 331 246 327 258L331 274 333 297H325L322 281 314 272 318 286 320 297H311L313 288 303 268 296 250C282 254 266 250 254 250L250 262 248 297H235L241 282 241 262C238 246 222 236 219 215C218 195 236 187 239 170C232 166 228 158 226 145Z"
          />
          <path
            fill="none"
            stroke="#d2d2d2"
            strokeWidth="4"
            strokeLinecap="round"
            d="M256 150C272 158 312 154 326 144L344 133M257 149L253 134M263 150L265 130M271 152L273 129M279 153L281 132 290 127M293 153L296 141 307 137M272 155C290 160 312 158 322 152"
          />
        </svg>
        <BrandText>
          <BrandName>3D溜溜网</BrandName>
          <BrandSite>3D66.COM</BrandSite>
        </BrandText>
      </Brand>
    </Window>
  );
}
